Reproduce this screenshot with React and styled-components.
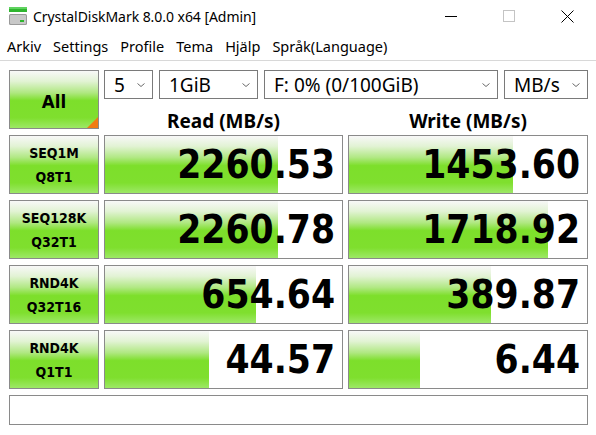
import React from 'react';
import styled, { createGlobalStyle } from 'styled-components';

const GlobalStyle = createGlobalStyle`
  html, body {
    margin: 0;
    padding: 0;
    background: #ffffff;
  }
  body {
    font-family: "Noto Sans", "Open Sans", sans-serif;
    color: #000;
  }
`;

const Window = styled.div`
  width: 596px;
  height: 435px;
  background: #ffffff;
  display: flex;
  flex-direction: column;
  overflow: hidden;
`;

const TitleBar = styled.div`
  flex: none;
  height: 32px;
  display: flex;
  align-items: center;
`;

const AppIcon = styled.svg`
  margin-left: 8px;
  flex: none;
`;

const Title = styled.div`
  margin-left: 5px;
  font-size: 14px;
  letter-spacing: -0.05px;
  flex: 1;
  white-space: nowrap;
`;

const WinButton = styled.div`
  width: 58px;
  height: 32px;
  display: flex;
  align-items: center;
  justify-content: center;
`;

const MenuBar = styled.div`
  flex: none;
  height: 28px;
  display: flex;
  align-items: center;
  padding-left: 1px;
  border-bottom: 1px solid #d8d8d8;
`;

const MenuItem = styled.div`
  font-size: 14.5px;
  padding: 0 6px;
  white-space: nowrap;
`;

const Main = styled.div`
  flex: none;
  padding: 9px 8px 0 9px;
  display: grid;
  grid-template-columns: 90px 239px 240px;
  grid-template-rows: repeat(5, 59px) 30px;
  column-gap: 5px;
  row-gap: 6px;
`;

const GreenBox = styled.div`
  position: relative;
  box-sizing: border-box;
  border: 1px solid #8a8a8a;
  background: linear-gradient(
    to bottom,
    #f8f8f8 0%,
    #e2f3d4 18%,
    #b0e882 38%,
    #7ddf2b 52%,
    #7fdf2e 82%,
    #9de866 100%
  );
  display: flex;
  flex-direction: column;
  align-items: center;
  justify-content: center;
`;

const AllButton = styled(GreenBox)`
  font-family: "DejaVu Sans Condensed", "DejaVu Sans", sans-serif;
  font-stretch: condensed;
  font-weight: bold;
  font-size: 18.5px;
  padding-top: 3px;
  &::after {
    content: "";
    position: absolute;
    right: 0;
    bottom: 0;
    border-style: solid;
    border-width: 0 0 11px 11px;
    border-color: transparent transparent #f07b12 transparent;
  }
`;

const TestLabel = styled(GreenBox)`
  font-family: "DejaVu Sans Condensed", "DejaVu Sans", sans-serif;
  font-stretch: condensed;
  font-weight: bold;
  font-size: 14px;
  line-height: 24px;
  padding-top: 1px;
`;

const TopRight = styled.div`
  grid-column: 2 / 4;
  display: flex;
  flex-direction: column;
`;

const ComboRow = styled.div`
  display: flex;
  gap: 6px;
  height: 29px;
`;

const Combo = styled.div`
  box-sizing: border-box;
  width: ${({ w }) => w}px;
  height: 29px;
  border: 1px solid #7a7a7a;
  display: flex;
  align-items: center;
  padding: 0 6px 0 9px;
  font-size: 19px;
  white-space: nowrap;
`;

const ComboText = styled.span`
  flex: 1;
`;

const HeaderRow = styled.div`
  display: grid;
  grid-template-columns: 239px 240px;
  column-gap: 5px;
  flex: 1;
`;

const Header = styled.div`
  display: flex;
  align-items: center;
  justify-content: center;
  padding-top: 9px;
  font-weight: bold;
  font-size: 19px;
`;

const ResultCell = styled.div`
  position: relative;
  box-sizing: border-box;
  border: 1px solid #8a8a8a;
  background: #ffffff;
  display: flex;
  align-items: center;
  justify-content: flex-end;
  padding-right: 7px;
  overflow: hidden;
`;

const Bar = styled(GreenBox)`
  position: absolute;
  left: 0;
  top: 0;
  bottom: 0;
  border: none;
`;

const Value = styled.span`
  position: relative;
  font-family: "DejaVu Sans Condensed", "DejaVu Sans", sans-serif;
  font-stretch: condensed;
  font-weight: bold;
  font-size: 38.5px;
  line-height: 1;
  padding-top: 2px;
`;

const StatusBox = styled.div`
  grid-column: 1 / 4;
  box-sizing: border-box;
  border: 1px solid #8a8a8a;
`;

const Chevron = () => (
  <svg width="10" height="6" viewBox="0 0 10 6">
    <polyline points="1.5,1.5 5,4.5 8.5,1.5" fill="none" stroke="#6a6a6a" strokeWidth="1" />
  </svg>
);

const rows = [
  { a: 'SEQ1M', b: 'Q8T1', read: '2260.53', rw: 173, write: '1453.60', ww: 164 },
  { a: 'SEQ128K', b: 'Q32T1', read: '2260.78', rw: 173, write: '1718.92', ww: 199 },
  { a: 'RND4K', b: 'Q32T16', read: '654.64', rw: 151, write: '389.87', ww: 142 },
  { a: 'RND4K', b: 'Q1T1', read: '44.57', rw: 104, write: '6.44', ww: 71 },
];

export default function App() {
  return (
    <Window>
      <GlobalStyle />
      <TitleBar>
        <AppIcon width="20" height="20" viewBox="0 0 20 20">
          <rect x="1" y="1" width="18" height="5" fill="#2fb52f" />
          <rect x="1" y="1" width="18" height="2" fill="#5fd35f" />
          <rect x="1" y="8" width="18" height="11" rx="1.5" fill="#9a9a9a" />
          <rect x="2" y="9" width="16" height="9" rx="1" fill="#c8c8c8" />
          <rect x="12" y="14" width="4" height="2" fill="#2fb52f" />
        </AppIcon>
        <Title>CrystalDiskMark 8.0.0 x64 [Admin]</Title>
        <WinButton>
          <svg width="12" height="12" viewBox="0 0 12 12">
            <line x1="0" y1="6.5" x2="12" y2="6.5" stroke="#000" strokeWidth="1" />
          </svg>
        </WinButton>
        <WinButton>
          <svg width="12" height="12" viewBox="0 0 12 12">
            <rect x="0.5" y="0.5" width="11" height="11" fill="none" stroke="#c4c4c4" strokeWidth="1" />
          </svg>
        </WinButton>
        <WinButton>
          <svg width="13" height="13" viewBox="0 0 13 13">
            <line x1="0.5" y1="0.5" x2="12.5" y2="12.5" stroke="#000" strokeWidth="1" />
            <line x1="12.5" y1="0.5" x2="0.5" y2="12.5" stroke="#000" strokeWidth="1" />
          </svg>
        </WinButton>
      </TitleBar>
      <MenuBar>
        <MenuItem>Arkiv</MenuItem>
        <MenuItem>Settings</MenuItem>
        <MenuItem>Profile</MenuItem>
        <MenuItem>Tema</MenuItem>
        <MenuItem>Hjälp</MenuItem>
        <MenuItem>Språk(Language)</MenuItem>
      </MenuBar>
      <Main>
        <AllButton>All</AllButton>
        <TopRight>
          <ComboRow>
            <Combo w={49}><ComboText>5</ComboText><Chevron /></Combo>
            <Combo w={99}><ComboText>1GiB</ComboText><Chevron /></Combo>
            <Combo w={234}><ComboText>F: 0% (0/100GiB)</ComboText><Chevron /></Combo>
            <Combo w={84}><ComboText>MB/s</ComboText><Chevron /></Combo>
          </ComboRow>
          <HeaderRow>
            <Header>Read (MB/s)</Header>
            <Header>Write (MB/s)</Header>
          </HeaderRow>
        </TopRight>
        {rows.map((r, i) => (
          <React.Fragment key={i}>
            <TestLabel>
              <span>{r.a}</span>
              <span>{r.b}</span>
            </TestLabel>
            <ResultCell>
              <Bar style={{ width: r.rw }} />
              <Value>{r.read}</Value>
            </ResultCell>
            <ResultCell>
              <Bar style={{ width: r.ww }} />
              <Value>{r.write}</Value>
            </ResultCell>
          </React.Fragment>
        ))}
        <StatusBox />
      </Main>
    </Window>
  );
}
